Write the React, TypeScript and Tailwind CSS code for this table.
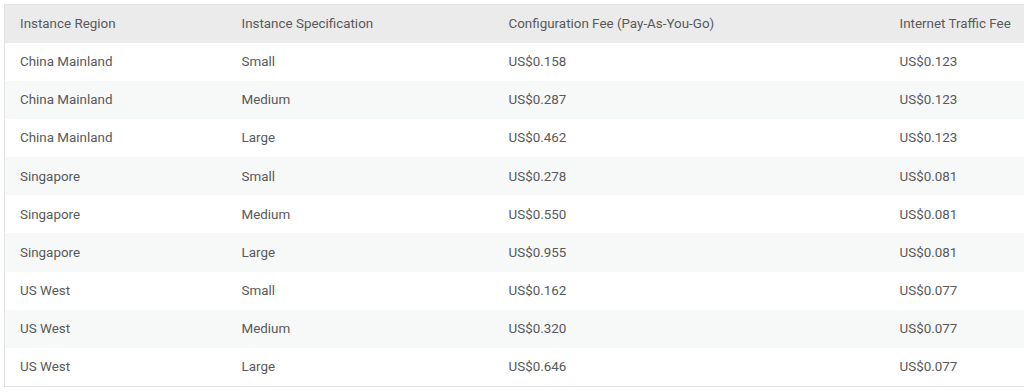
const rows = [
  ['China Mainland', 'Small', 'US$0.158', 'US$0.123'],
  ['China Mainland', 'Medium', 'US$0.287', 'US$0.123'],
  ['China Mainland', 'Large', 'US$0.462', 'US$0.123'],
  ['Singapore', 'Small', 'US$0.278', 'US$0.081'],
  ['Singapore', 'Medium', 'US$0.550', 'US$0.081'],
  ['Singapore', 'Large', 'US$0.955', 'US$0.081'],
  ['US West', 'Small', 'US$0.162', 'US$0.077'],
  ['US West', 'Medium', 'US$0.320', 'US$0.077'],
  ['US West', 'Large', 'US$0.646', 'US$0.077'],
];

export default function App() {
  return (
    <div className="w-[1024px] h-[392px] bg-white overflow-hidden pl-1 pt-1 font-['Roboto',sans-serif] text-[13.4px] text-[#595959]">
      <table className="w-[1080px] border-collapse table-fixed border border-[#e3e3e3]">
        <colgroup>
          <col className="w-[222px]" />
          <col className="w-[267px]" />
          <col className="w-[391px]" />
          <col />
        </colgroup>
        <thead>
          <tr className="bg-[#ebebeb] h-[38px]">
            <th className="text-left font-normal pl-[15px] pt-px">Instance Region</th>
            <th className="text-left font-normal pl-[15px] pt-px">Instance Specification</th>
            <th className="text-left font-normal pl-[15px] pt-px">Configuration Fee (Pay-As-You-Go)</th>
            <th className="text-left font-normal pl-[15px] pt-px">Internet Traffic Fee</th>
          </tr>
        </thead>
        <tbody>
          {rows.map((r, i) => (
            <tr key={i} className={i % 2 === 1 ? 'bg-[#f7f8f8] h-[38.2px]' : 'bg-white h-[38.2px]'}>
              {r.map((c, j) => (
                <td key={j} className="pl-[15px] pt-px">{c}</td>
              ))}
            </tr>
          ))}
        </tbody>
      </table>
    </div>
  );
}
